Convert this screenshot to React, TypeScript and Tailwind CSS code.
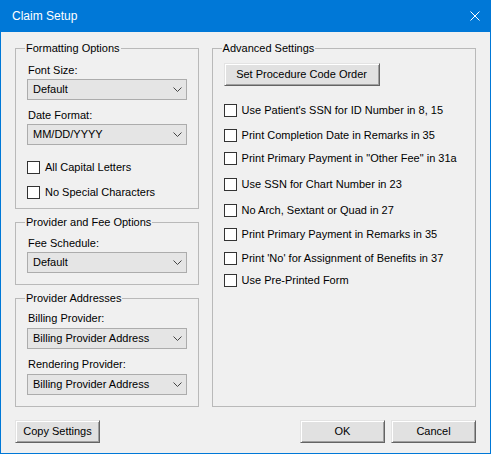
import React from "react";

const font = { fontFamily: '"Liberation Sans", Arial, sans-serif' };

const Combo = ({ value }: { value: string }) => (
  <div className="flex h-[21px] w-[160px] items-center justify-between border border-[#acacac] bg-[#e5e5e5] pl-[5px] pr-[4px]">
    <span className="text-[11px] leading-[15px] text-black">{value}</span>
    <svg width="9" height="5" viewBox="0 0 9 5" className="text-[#444]">
      <polyline points="0.5,0.5 4.5,4.5 8.5,0.5" fill="none" stroke="currentColor" strokeWidth="1" />
    </svg>
  </div>
);

const Check = ({ label, className = "" }: { label: string; className?: string }) => (
  <div className={`flex h-[15px] items-center gap-[5px] ${className}`}>
    <div className="h-[13px] w-[13px] shrink-0 border border-[#333] bg-white" />
    <span className="whitespace-nowrap text-[11px] leading-[15px] text-black">{label}</span>
  </div>
);

const Btn = ({ label, className = "" }: { label: string; className?: string }) => (
  <button
    className={`flex h-[23px] items-center justify-center border border-t-[#e3e3e3] border-l-[#e3e3e3] border-b-[#646464] border-r-[#646464] bg-[#e1e1e1] text-[11px] leading-[15px] text-black shadow-[inset_1px_1px_0_#fff,inset_-1px_-1px_0_#a0a0a0] ${className}`}
  >
    {label}
  </button>
);

const Group = ({
  title,
  className = "",
  children,
}: {
  title: string;
  className?: string;
  children: React.ReactNode;
}) => (
  <div className={`relative border border-[#b9b9b9] ${className}`}>
    <span className="absolute -top-[8px] left-[9px] bg-[#f0f0f0] px-[1px] text-[11px] leading-[15px] text-black">
      {title}
    </span>
    {children}
  </div>
);

const Label = ({ text, className = "" }: { text: string; className?: string }) => (
  <div className={`pl-[1px] text-[11px] leading-[15px] text-black ${className}`}>{text}</div>
);

export default function App() {
  const advanced: [string, string][] = [
    ["Use Patient's SSN for ID Number in 8, 15", "mt-[17px]"],
    ["Print Completion Date in Remarks in 35", "mt-[10px]"],
    ["Print Primary Payment in \"Other Fee\" in 31a", "mt-[8px]"],
    ["Use SSN for Chart Number in 23", "mt-[11px]"],
    ["No Arch, Sextant or Quad in 27", "mt-[11px]"],
    ["Print Primary Payment in Remarks in 35", "mt-[9px]"],
    ["Print 'No' for Assignment of Benefits in 37", "mt-[9px]"],
    ["Use Pre-Printed Form", "mt-[7px]"],
  ];

  return (
    <div style={font} className="flex h-[454px] w-[491px] flex-col border-x border-b border-[#0078d7] bg-[#f0f0f0]">
      {/* title bar */}
      <div className="-mx-px flex h-[32px] shrink-0 items-center justify-between bg-[#0078d7] pl-[12px] pr-[11px]">
        <span className="text-[12px] leading-[15px] text-white">Claim Setup</span>
        <svg width="10" height="10" viewBox="0 0 10 10">
          <path d="M0.5 0.5 L9.5 9.5 M9.5 0.5 L0.5 9.5" stroke="#fff" strokeWidth="1" />
        </svg>
      </div>

      <div className="flex flex-1 flex-col px-[14px] pt-[16px]">
        <div className="flex gap-[13px]">
          {/* left column */}
          <div className="flex w-[184px] flex-col gap-[13px]">
            <Group title="Formatting Options" className="h-[161px]">
              <div className="flex flex-col pl-[11px] pt-[14px]">
                <Label text="Font Size:" />
                <div className="mt-[1px]">
                  <Combo value="Default" />
                </div>
                <Label text="Date Format:" className="mt-[8px]" />
                <div className="mt-[1px]">
                  <Combo value="MM/DD/YYYY" />
                </div>
                <Check label="All Capital Letters" className="mt-[15px]" />
                <Check label="No Special Characters" className="mt-[10px]" />
              </div>
            </Group>

            <Group title="Provider and Fee Options" className="h-[63px]">
              <div className="flex flex-col pl-[11px] pt-[13px]">
                <Label text="Fee Schedule:" />
                <div className="mt-[1px]">
                  <Combo value="Default" />
                </div>
              </div>
            </Group>

            <Group title="Provider Addresses" className="h-[109px]">
              <div className="flex flex-col pl-[11px] pt-[12px]">
                <Label text="Billing Provider:" />
                <div className="mt-[2px]">
                  <Combo value="Billing Provider Address" />
                </div>
                <Label text="Rendering Provider:" className="mt-[8px]" />
                <div className="mt-[2px]">
                  <Combo value="Billing Provider Address" />
                </div>
              </div>
            </Group>
          </div>

          {/* right column */}
          <Group title="Advanced Settings" className="h-[359px] w-[265px]">
            <div className="flex flex-col pl-[11px] pt-[14px]">
              <Btn label="Set Procedure Code Order" className="w-[156px]" />
              {advanced.map(([t, m]) => (
                <Check key={t} label={t} className={m} />
              ))}
            </div>
          </Group>
        </div>

        <div className="mt-[13px] flex items-center">
          <Btn label="Copy Settings" className="w-[85px]" />
          <div className="flex-1" />
          <Btn label="OK" className="w-[85px]" />
          <Btn label="Cancel" className="ml-[6px] w-[85px]" />
        </div>
      </div>
    </div>
  );
}
